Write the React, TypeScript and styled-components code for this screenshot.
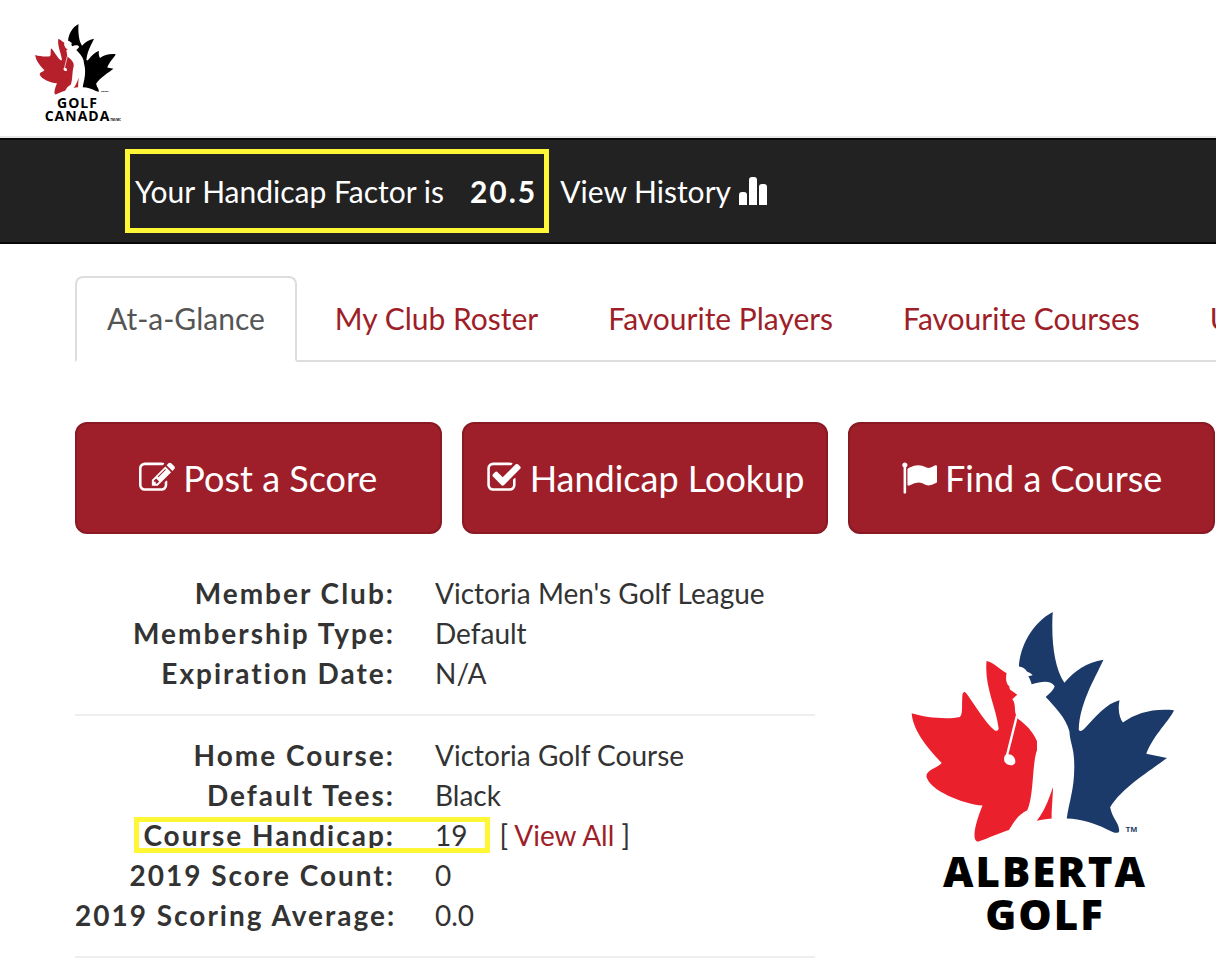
import React from "react";
import styled, { createGlobalStyle, css } from "styled-components";

const brand = "#9e1e29";
const marker = "#fff735";

const GlobalStyle = createGlobalStyle`
  *, *::before, *::after { box-sizing: border-box; }
  body {
    margin: 0;
    background: #fff;
    color: #333;
    font-family: Lato, "Liberation Sans", sans-serif;
    font-size: 28px;
    line-height: 40px;
    overflow-x: hidden;
  }
  a { color: ${brand}; text-decoration: none; }
`;

const Header = styled.header`
  height: 138px;
  padding: 24px 35px 0;
  border-bottom: 2px solid #e7e7e7;
`;

const HomeLink = styled.a`
  display: inline-flex;
`;

const LogoBox = styled.span<{ $width: number }>`
  display: flex;
  flex-direction: column;
  align-items: center;
  width: ${(p) => p.$width}px;
`;

const Leaf = styled.svg`
  display: block;
  width: 100%;
  height: auto;
  overflow: visible;
`;

const Wordmark = styled.span<{ $size: "small" | "large" }>`
  position: relative;
  color: #000;
  font-family: "Open Sans", "Noto Sans", sans-serif;
  text-align: center;
  white-space: nowrap;
  ${(p) =>
    p.$size === "large"
      ? css`
          margin-top: 6px;
          padding-left: 4px;
          font-size: 42px;
          font-weight: 800;
          line-height: 43px;
          letter-spacing: 2px;
        `
      : css`
          margin-top: 1px;
          padding-left: 4px;
          font-size: 14px;
          font-weight: 700;
          line-height: 13px;
          letter-spacing: 1px;
        `}
`;

const TradeMark = styled.small`
  position: absolute;
  left: 100%;
  bottom: 0;
  font-size: 3px;
  line-height: 4px;
  letter-spacing: 0;
`;

const HandicapBar = styled.section`
  display: flex;
  align-items: center;
  gap: 11px;
  height: 106px;
  padding: 0 125px;
  border: solid #080808;
  border-width: 2px 0;
  background: #222;
  color: #fff;
  font-size: 30px;
  white-space: nowrap;
`;

const FactorBox = styled.p`
  display: flex;
  align-items: center;
  gap: 26px;
  height: 84px;
  margin: 0;
  padding: 0 7px 0 5px;
  border: 5px solid ${marker};
`;

const Factor = styled.strong`
  letter-spacing: 2px;
`;

const HistoryLink = styled.a`
  display: inline-flex;
  align-items: center;
  gap: 8px;
  color: #fff;
`;

const Main = styled.main`
  padding: 32px 1px 0 75px;
`;

const TabNav = styled.nav`
  margin-right: -1px;
  overflow: hidden;
`;

const TabList = styled.ul`
  display: flex;
  gap: 6px;
  margin: 0;
  padding: 0;
  list-style: none;
  border-bottom: 2px solid #ddd;
  font-size: 30px;
  white-space: nowrap;
`;

const Tab = styled.li<{ $active?: boolean }>`
  margin-bottom: -2px;
  padding: 20px 30px;
  height: 86px;
  border: 2px solid ${(p) => (p.$active ? "#ddd" : "transparent")};
  border-bottom-color: ${(p) => (p.$active ? "#fff" : "transparent")};
  border-radius: 8px 8px 0 0;

  a {
    color: ${(p) => (p.$active ? "#555" : brand)};
  }
`;

const Actions = styled.div`
  display: grid;
  grid-template-columns: repeat(3, 1fr);
  gap: 20px;
  margin: 60px 0 39px;
`;

const ActionButton = styled.button`
  display: flex;
  align-items: center;
  justify-content: center;
  gap: 8px;
  height: 112px;
  padding: 0 20px;
  border: 2px solid #891a24;
  border-radius: 12px;
  background: ${brand};
  color: #fff;
  font: inherit;
  font-size: 36px;
  white-space: nowrap;
  cursor: pointer;
`;

const Columns = styled.div`
  display: grid;
  grid-template-columns: 740fr 344fr;
  gap: 56px;
`;

const Details = styled.dl`
  margin: 0;
  padding-bottom: 21px;
  border-bottom: 2px solid #eee;

  & + & {
    padding-top: 19px;
  }
`;

const DetailRow = styled.div<{ $marked?: boolean }>`
  display: grid;
  grid-template-columns: 320px 1fr;
  gap: 40px;
  position: relative;
  white-space: nowrap;

  ${(p) =>
    p.$marked &&
    css`
      &::after {
        content: "";
        position: absolute;
        left: 59px;
        top: 2px;
        width: 356px;
        height: 36px;
        border: 5px solid ${marker};
        pointer-events: none;
      }
    `}

  dt {
    font-weight: 700;
    letter-spacing: 2px;
    text-align: right;
  }

  dd {
    margin: 0;
  }
`;

const Aside = styled.span`
  margin-left: 32px;
`;

const Association = styled.aside`
  display: flex;
  justify-content: center;
  padding-top: 39px;
`;

interface LeafMarkProps {
  left: string;
  right: string;
  title: string;
  mark: string;
}

function LeafMark({ left, right, title, mark }: LeafMarkProps) {
  return (
    <Leaf viewBox="36 38 790 690" role="img" aria-label={title}>
      <path
        fill={right}
        d="M460 38C455 125 465 205 495 250C525 215 562 188 612 181C582 245 541 312 538 390C542 398 550 392 556 386C590 350 620 312 660 302C654 330 660 355 670 369C710 340 760 326 823 332C812 360 762 405 740 462L802 475C760 508 670 560 632 622C638 655 660 670 659 694C655 704 640 697 620 687C585 670 545 657 502 656C510 600 528 560 524 480C522 440 512 430 510 395C500 355 465 320 439 292C450 283 462 272 466 260C455 243 432 243 397 254C395 244 391 237 387 230L400 227C396 221 389 220 383 216C378 206 369 203 359 201C362 140 400 70 460 38Z"
      />
      <path
        fill={left}
        d="M262 185C285 189 300 210 322 221C318 240 322 254 330 260L332 270L354 286L339 299C350 310 345 335 350 345L355 357C380 375 400 395 413 425L413 452C398 490 404 590 384 631C355 645 345 665 329 690C300 699 265 715 238 725C214 725 230 665 250 617C190 612 92 572 82 530C82 510 115 505 128 490C100 460 42 400 38 341C80 355 150 360 182 352C192 345 187 320 190 285C192 275 198 275 202 282C230 320 260 372 286 392C292 396 299 392 298 385C290 320 255 260 262 185Z"
      />
      <path fill={left} d="M461 562C460 600 456 630 457 656Q430 658 412 663C430 642 445 610 461 562Z" />
      <path stroke="#fff" strokeWidth="7" fill="none" d="M353 348L322 472" />
      <path fill="#fff" d="M318 466C335 458 350 472 348 488C344 500 325 499 316 486C313 478 315 470 318 466Z" />
      <text x="678" y="697" fill={right} fontFamily="Liberation Sans, sans-serif" fontSize="24" fontWeight="700">
        {mark}
      </text>
    </Leaf>
  );
}

const iconPaths = {
  edit: "M888 1184l116-116-152-152-116 116v56h96v96h56zm440-720q-16-16-33 1l-350 350q-17 17-1 33t33-1l350-350q17-17 1-33zm80 594v190q0 119-84.5 203.5t-203.5 84.5h-832q-119 0-203.5-84.5t-84.5-203.5v-832q0-119 84.5-203.5t203.5-84.5h832q63 0 117 25 15 7 18 23 3 17-9 29l-49 49q-14 14-32 8-23-6-45-6h-832q-66 0-113 47t-47 113v832q0 66 47 113t113 47h832q66 0 113-47t47-113v-126q0-13 9-22l64-64q15-15 35-7t20 29zm-96-738l288 288-672 672h-288v-288zm444 132l-92 92-288-288 92-92q28-28 68-28t68 28l152 152q28 28 28 68t-28 68z",
  check: "M1472 930v318q0 119-84.5 203.5t-203.5 84.5h-832q-119 0-203.5-84.5t-84.5-203.5v-832q0-119 84.5-203.5t203.5-84.5h832q63 0 117 25 15 7 18 23 3 17-9 29l-49 49q-10 10-23 10-3 0-9-2-23-6-45-6h-832q-66 0-113 47t-47 113v832q0 66 47 113t113 47h832q66 0 113-47t47-113v-254q0-13 9-22l64-64q10-10 23-10 6 0 12 3 20 8 20 29zm231-489l-814 814q-24 24-57 24t-57-24l-430-430q-24-24-24-57t24-57l110-110q24-24 57-24t57 24l263 263 647-647q24-24 57-24t57 24l110 110q24 24 24 57t-24 57z",
  flag: "M320 256q0 72-64 110v1266q0 13-9.5 22.5t-22.5 9.5h-64q-13 0-22.5-9.5t-9.5-22.5v-1266q-64-38-64-110 0-53 37.5-90.5t90.5-37.5 90.5 37.5 37.5 90.5zm1472 64v763q0 25-12.5 38.5t-39.5 27.5q-215 116-369 116-61 0-123.5-22t-108.5-48-115.5-48-142.5-22q-192 0-464 146-17 9-33 9-26 0-45-19t-19-45v-742q0-32 31-55 21-14 79-43 236-120 421-120 107 0 200 29t219 88q38 19 88 19 54 0 117.5-21t110-47 88-47 54.5-21q26 0 45 19t19 45z",
};

function ActionIcon({ name }: { name: keyof typeof iconPaths }) {
  return (
    <svg width="36" height="36" viewBox="0 0 1792 1792" fill="currentColor" aria-hidden="true">
      <path d={iconPaths[name]} />
    </svg>
  );
}

function StatsIcon() {
  return (
    <svg width="28" height="28" viewBox="0 0 28 28" fill="currentColor" aria-hidden="true">
      <path d="M0 28V18Q0 15 3 15H5Q8 15 8 18V28ZM10 28V3Q10 0 13 0H15Q18 0 18 3V28ZM20 28V10Q20 7 23 7H25Q28 7 28 10V28Z" />
    </svg>
  );
}

const tabs = ["At-a-Glance", "My Club Roster", "Favourite Players", "Favourite Courses", "U"];

const actions: { icon: keyof typeof iconPaths; label: string }[] = [
  { icon: "edit", label: "Post a Score" },
  { icon: "check", label: "Handicap Lookup" },
  { icon: "flag", label: "Find a Course" },
];

export default function App() {
  return (
    <>
      <GlobalStyle />
      <Header>
        <HomeLink href="#">
          <LogoBox $width={81}>
            <LeafMark left="#b5202b" right="#000" title="Golf Canada" mark="TM/MC" />
            <Wordmark $size="small">
              GOLF
              <br />
              CANADA
              <TradeMark>TM/MC</TradeMark>
            </Wordmark>
          </LogoBox>
        </HomeLink>
      </Header>

      <HandicapBar>
        <FactorBox>
          Your Handicap Factor is <Factor>20.5</Factor>
        </FactorBox>
        <HistoryLink href="#">
          View History <StatsIcon />
        </HistoryLink>
      </HandicapBar>

      <Main>
        <TabNav>
          <TabList>
            {tabs.map((tab, i) => (
              <Tab key={tab} $active={i === 0}>
                <a href="#">{tab}</a>
              </Tab>
            ))}
          </TabList>
        </TabNav>

        <Actions>
          {actions.map(({ icon, label }) => (
            <ActionButton key={label} type="button">
              <ActionIcon name={icon} />
              {label}
            </ActionButton>
          ))}
        </Actions>

        <Columns>
          <div>
            <Details>
              <DetailRow>
                <dt>Member Club:</dt>
                <dd>Victoria Men's Golf League</dd>
              </DetailRow>
              <DetailRow>
                <dt>Membership Type:</dt>
                <dd>Default</dd>
              </DetailRow>
              <DetailRow>
                <dt>Expiration Date:</dt>
                <dd>N/A</dd>
              </DetailRow>
            </Details>
            <Details>
              <DetailRow>
                <dt>Home Course:</dt>
                <dd>Victoria Golf Course</dd>
              </DetailRow>
              <DetailRow>
                <dt>Default Tees:</dt>
                <dd>Black</dd>
              </DetailRow>
              <DetailRow $marked>
                <dt>Course Handicap:</dt>
                <dd>
                  19
                  <Aside>
                    [ <a href="#">View All</a> ]
                  </Aside>
                </dd>
              </DetailRow>
              <DetailRow>
                <dt>2019 Score Count:</dt>
                <dd>0</dd>
              </DetailRow>
              <DetailRow>
                <dt>2019 Scoring Average:</dt>
                <dd>0.0</dd>
              </DetailRow>
            </Details>
          </div>
          <Association>
            <LogoBox $width={264}>
              <LeafMark left="#ea212d" right="#1b3a69" title="Alberta Golf" mark="TM" />
              <Wordmark $size="large">
                ALBERTA
                <br />
                GOLF
              </Wordmark>
            </LogoBox>
          </Association>
        </Columns>
      </Main>
    </>
  );
}
